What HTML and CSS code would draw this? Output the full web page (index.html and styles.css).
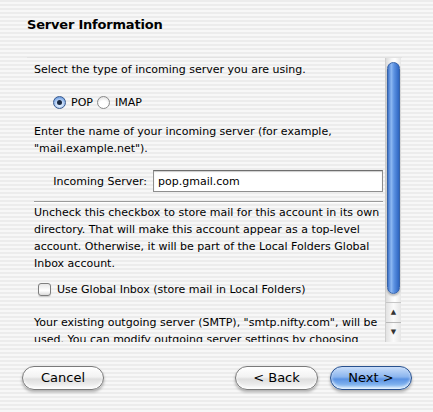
FILE: index.html
```html
<!DOCTYPE html>
<html>
<head>
<meta charset="utf-8">
<link rel="stylesheet" href="styles.css">
</head>
<body>
<div class="window">
  <div class="header"><h1 class="title">Server Information</h1></div>
  <div class="scrollview">
    <div class="content">
      <p class="line">Select the type of incoming server you are using.</p>
      <div class="radios">
        <label class="radio"><span class="radio-dot on"></span><span>POP</span></label>
        <label class="radio"><span class="radio-dot"></span><span>IMAP</span></label>
      </div>
      <p class="para p-enter">Enter the name of your incoming server (for example, "mail.example.net").</p>
      <div class="field-row">
        <span class="field-label">Incoming Server:</span>
        <div class="field">pop.gmail.com</div>
      </div>
      <div class="sep"></div>
      <p class="para">Uncheck this checkbox to store mail for this account in its own directory. That will make this account appear as a top-level account. Otherwise, it will be part of the Local Folders Global Inbox account.</p>
      <label class="check-row"><span class="checkbox"></span><span>Use Global Inbox (store mail in Local Folders)</span></label>
      <p class="para p-out">Your existing outgoing server (SMTP), "smtp.nifty.com", will be used. You can modify outgoing server settings by choosing Account Settings.</p>
    </div>
    <div class="scrollbar">
      <div class="track">
        <div class="thumb"></div>
      </div>
      <div class="arrow up">&#9650;</div>
      <div class="arrow down">&#9660;</div>
    </div>
  </div>
  <div class="buttons">
    <button class="btn btn-cancel">Cancel</button>
    <div class="spacer"></div>
    <button class="btn btn-back">&lt; Back</button>
    <button class="btn btn-next">Next &gt;</button>
  </div>
</div>
</body>
</html>
```

FILE: styles.css
```css
html, body {
  margin: 0;
  padding: 0;
}
body {
  width: 433px;
  height: 412px;
  overflow: hidden;
  font-family: "DejaVu Sans", "Liberation Sans", sans-serif;
  font-size: 11px;
  color: #000;
  background: repeating-linear-gradient(to bottom, #ececec 0 2px, #f7f7f7 2px 4px);
}
.window {
  width: 433px;
  height: 412px;
  display: flex;
  flex-direction: column;
}
.header {
  height: 57px;
  padding-left: 27px;
  box-sizing: border-box;
  padding-top: 17px;
}
.title {
  margin: 0;
  font-size: 13px;
  line-height: 16px;
  font-weight: bold;
  letter-spacing: -0.2px;
}
.scrollview {
  margin-left: 27px;
  width: 375px;
  height: 285px;
  display: flex;
  overflow: hidden;
  border-top: 1px solid #e2e2e2;
  box-sizing: border-box;
}
.content {
  width: 349px;
  padding-left: 7px;
  padding-top: 3px;
  flex: none;
}
.line, .para {
  margin: 0;
  line-height: 17px;
}
.radios {
  display: flex;
  align-items: center;
  margin-top: 16px;
  margin-left: 19px;
  height: 17px;
  gap: 4px;
}
.radio {
  display: flex;
  align-items: center;
  gap: 5px;
}
.radio-dot {
  width: 13px;
  height: 13px;
  border-radius: 50%;
  box-sizing: border-box;
  border: 1px solid #8a8a8a;
  background: radial-gradient(circle at 50% 70%, #ffffff 0 40%, #d8d8d8 100%);
  position: relative;
}
.radio-dot.on {
  border-color: #3a5a8c;
  background: radial-gradient(circle at 50% 65%, #d6e6fb 0 30%, #6a9be0 80%, #3e72c8 100%);
}
.radio-dot.on::after {
  content: "";
  position: absolute;
  left: 3px;
  top: 3px;
  width: 5px;
  height: 5px;
  border-radius: 50%;
  background: #1a2a44;
}
.p-enter {
  margin-top: 12px;
}
.field-row {
  display: flex;
  align-items: center;
  margin-top: 13px;
}
.field-label {
  width: 113px;
  text-align: right;
  margin-right: 6px;
}
.field {
  width: 230px;
  height: 22px;
  box-sizing: border-box;
  border: 1px solid #8e8e8e;
  border-top-color: #6e6e6e;
  background: #fff;
  box-shadow: inset 0 1px 1px rgba(0,0,0,0.2);
  padding: 3px 4px 0;
  line-height: 16px;
  font-size: 11px;
}
.sep {
  margin-top: 9px;
  height: 1px;
  background: #9a9a9a;
  border-bottom: 1px solid #ffffff;
  margin-bottom: 1px;
}
.check-row {
  display: flex;
  align-items: center;
  gap: 6px;
  margin-top: 9px;
  margin-left: 4px;
  height: 17px;
}
.checkbox {
  width: 13px;
  height: 13px;
  box-sizing: border-box;
  border: 1px solid #7e7e7e;
  border-radius: 3px;
  background: linear-gradient(to bottom, #e6e6e6, #ffffff 60%, #dadada);
  box-shadow: 0 1px 1px rgba(0,0,0,0.15);
}
.p-out {
  margin-top: 16px;
}
.scrollbar {
  margin-left: 2px;
  width: 16px;
  height: 284px;
  display: flex;
  flex-direction: column;
  flex: none;
  border-left: 1px solid #cfcfcf;
  box-sizing: border-box;
  background: linear-gradient(to right, #dcdcdc, #f8f8f8 40%, #ffffff 60%, #e6e6e6);
}
.track {
  flex: 1;
  padding: 4px 1px 3px 1px;
  display: flex;
  flex-direction: column;
}
.thumb {
  height: 230px;
  border-radius: 7px;
  border: 1px solid #3763a8;
  background: linear-gradient(to right, #3f73c9, #8db8f2 30%, #5c92e2 55%, #2f66c2 100%);
  box-shadow: 0 2px 2px rgba(0,0,0,0.25);
}
.arrow {
  height: 19px;
  font-size: 7px;
  line-height: 19px;
  text-align: center;
  color: #333;
  border-top: 1px solid #b8b8b8;
  background: linear-gradient(to right, #e2e2e2, #fafafa 50%, #e6e6e6);
}
.arrow.up {
  border-top-color: #c6c6c6;
}
.buttons {
  display: flex;
  align-items: center;
  margin-top: 24px;
  padding-left: 22px;
}
.spacer {
  width: 131px;
}
.btn {
  height: 24px;
  border-radius: 12px;
  font-family: "DejaVu Sans", "Liberation Sans", sans-serif;
  font-size: 13px;
  color: #000;
  padding: 0;
  border: 1px solid #7a7a7a;
  background: linear-gradient(to bottom, #ffffff 0%, #f2f2f2 45%, #dedede 55%, #f8f8f8 100%);
  box-shadow: 0 2px 3px rgba(0,0,0,0.3), inset 0 -2px 3px rgba(255,255,255,0.8);
  line-height: 20px;
}
.btn-cancel {
  width: 82px;
}
.btn-back {
  width: 83px;
}
.btn-next {
  width: 82px;
  margin-left: 12px;
  border-color: #27508e;
  background: linear-gradient(to bottom, #c9defa 0%, #8bb5ee 45%, #5b93e3 55%, #9ccaf7 100%);
}
```
